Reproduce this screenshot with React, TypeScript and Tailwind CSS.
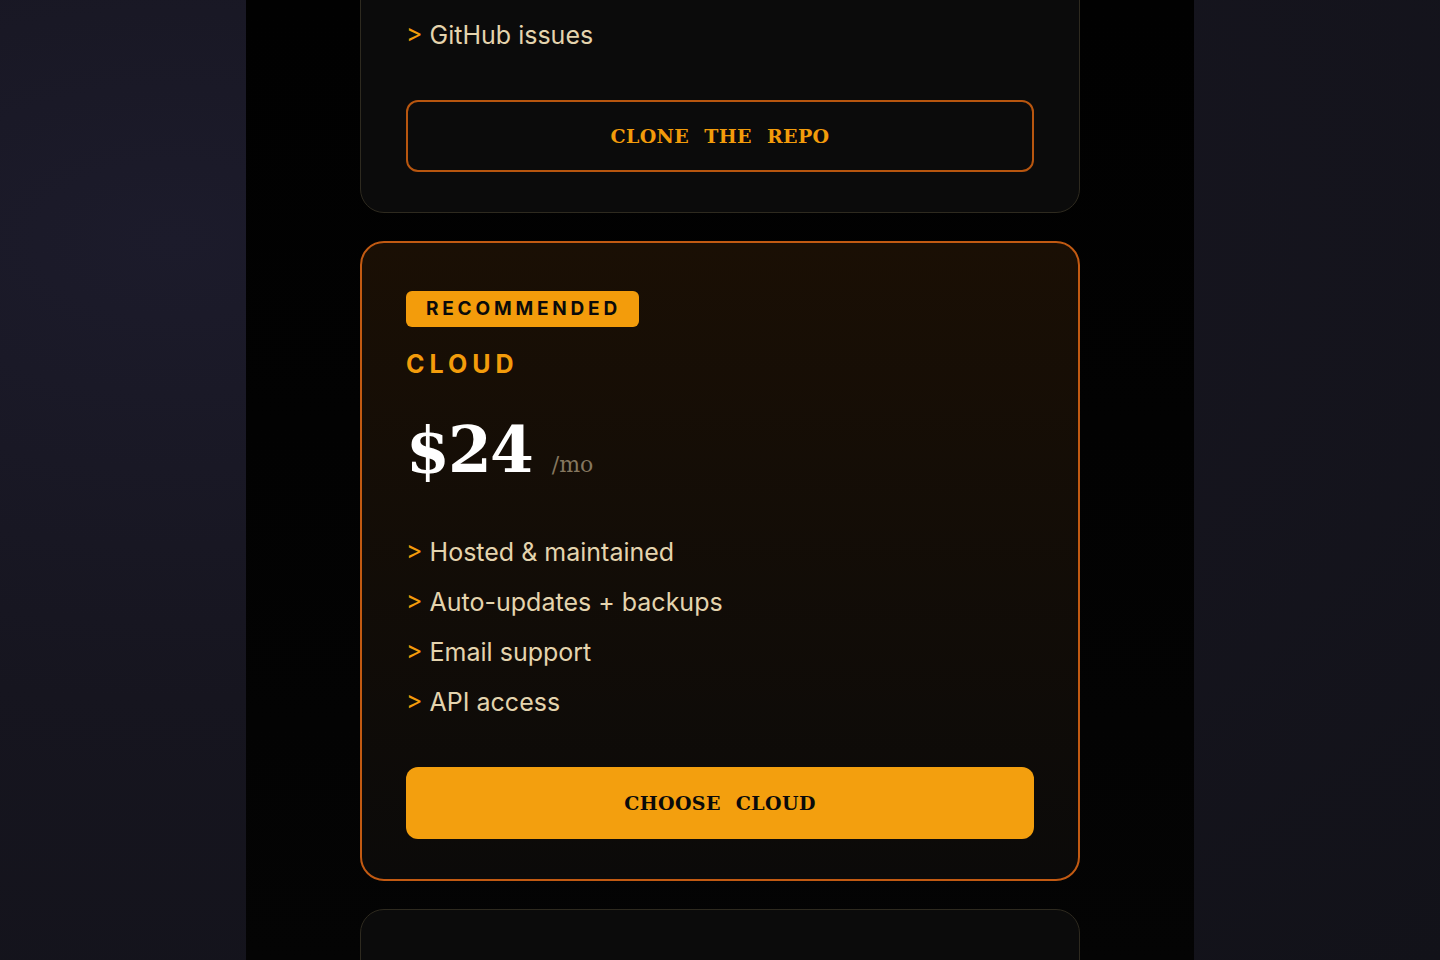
import React from 'react'

type Plan = {
  name: string
  price: string
  unit: string
  features: string[]
  cta: string
  recommended?: boolean
}

const plans: Plan[] = [
  {
    name: 'Open Source',
    price: '$0',
    unit: '/forever',
    features: ['Self-hosted', 'Full source access', 'MIT license', 'GitHub issues'],
    cta: 'Clone the repo',
  },
  {
    name: 'Cloud',
    price: '$24',
    unit: '/mo',
    features: ['Hosted & maintained', 'Auto-updates + backups', 'Email support', 'API access'],
    cta: 'Choose cloud',
    recommended: true,
  },
  {
    name: 'Team',
    price: '$79',
    unit: '/mo',
    features: ['Everything in Cloud', 'SSO + audit log', 'Priority support', 'Custom domains'],
    cta: 'Talk to us',
  },
]

const sans = "font-['Inter','Noto_Sans',sans-serif]"
// slab-serif stand-in for the typewriter face
const slab = "font-['DejaVu_Serif','Liberation_Serif',serif]"

const PlanCard = ({ plan }: { plan: Plan }) => {
  const rec = plan.recommended
  return (
    <div
      className={
        rec
          ? 'rounded-[24px] border-2 border-[#c25a12] bg-gradient-to-b from-[#1a0f04] to-[#0b0a09] px-[44px] pt-12 pb-10'
          : 'rounded-[24px] border border-[#2e2a1f] bg-[#0b0b0b] px-[45px] pt-[47px] pb-10'
      }
    >
      {rec && (
        <div className="mb-[21px] flex">
          <span
            className={`${sans} inline-flex h-9 items-center rounded-[6px] bg-[#f39c0b] pl-5 pr-[18px] text-[19px] font-bold tracking-[0.2em] text-[#0a0a0a]`}
          >
            RECOMMENDED
          </span>
        </div>
      )}
      <h3 className={`${sans} h-8 text-[25px] leading-8 font-bold tracking-[0.2em] text-[#f39c0b] uppercase`}>
        {plan.name}
      </h3>
      <div className="mt-[34px] flex h-[72px] items-baseline">
        <span className={`${slab} text-[63px] leading-[72px] font-bold tracking-[-0.03em] text-white`}>
          {plan.price}
        </span>
        <span className={`${slab} ml-[20px] text-[22px] leading-none text-[#85775f]`}>{plan.unit}</span>
      </div>
      <ul className={`${sans} mt-[48px] flex flex-col gap-[14px] text-[25px] leading-9 text-[#e4d4ae]`}>
        {plan.features.map((f) => (
          <li key={f}>
            <span className="text-[#f39c0b]">&gt;</span> {f}
          </li>
        ))}
      </ul>
      <button
        className={
          rec
            ? `${slab} mt-[47px] flex h-[72px] w-full items-center justify-center rounded-[12px] bg-[#f39f0e] text-[19px] font-bold tracking-[0.02em] [word-spacing:8px] text-[#0a0a0a] uppercase`
            : `${slab} mt-[47px] flex h-[72px] w-full items-center justify-center rounded-[12px] border-2 border-[#b8560f] text-[19px] font-bold tracking-[0.02em] [word-spacing:8px] text-[#f39c0b] uppercase`
        }
      >
        {plan.cta}
      </button>
    </div>
  )
}

export default function App() {
  return (
    <div className="h-[960px] overflow-hidden bg-[#14141c] bg-[radial-gradient(ellipse_at_12%_25%,#1c1b2b_0%,#16151f_45%,#121219_100%)]">
      <div className="mx-auto flex h-full w-[948px] flex-col bg-gradient-to-b from-[#010101] to-[#040404]">
        <div className="mx-auto -mt-[367px] flex w-[720px] flex-col gap-7">
          {plans.map((p) => (
            <PlanCard key={p.name} plan={p} />
          ))}
        </div>
      </div>
    </div>
  )
}
